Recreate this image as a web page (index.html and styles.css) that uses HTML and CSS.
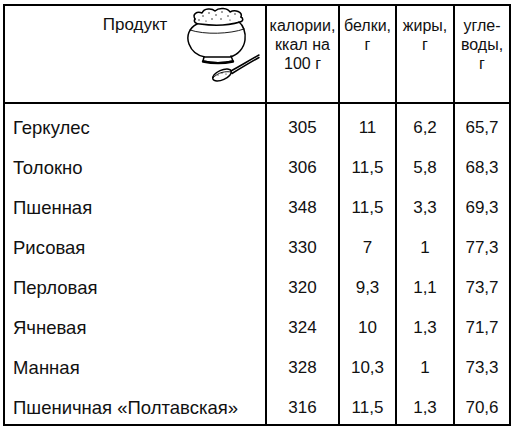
FILE: index.html
```html
<!DOCTYPE html>
<html lang="ru">
<head>
<meta charset="utf-8">
<link rel="stylesheet" href="styles.css">
</head>
<body>
<table class="grid">
  <colgroup>
    <col class="c-name"><col class="c-kcal"><col class="c-p"><col class="c-f"><col class="c-c">
  </colgroup>
  <thead>
    <tr class="head">
      <th class="h-name">
        <span class="h-title">Продукт</span>
        <svg class="pot" viewBox="180 5 80 85" width="80" height="85" aria-hidden="true">
          <g fill="none" stroke="#000" stroke-width="1.5" stroke-linecap="round" stroke-linejoin="round">
            <path d="M195 19 C192 14 197 11 202 13 C204 8 212 8 215 11 C219 7 228 8 230 12 C235 9 243 12 241 17"/>
            <path d="M195 19 C193 22 196 24 200 24 C215 26 230 25 240 22 C244 21 243 18 241 17"/>
            <path d="M197 24 C189 28 186 36 189 44 C192 52 199 56 205 57 L230 57 C238 55 244 48 245 40 C246 32 243 25 239 22"/>
            <path d="M190 30 C205 35 230 34 244 29" stroke-width="0.9"/>
            <path d="M204 57 L203 61 C212 63 224 63 233 61 L231 56"/>
            <path d="M203 61.5 C212 63.5 224 63.5 233 61.5" stroke-width="2.4"/>
            <ellipse cx="222" cy="75" rx="10" ry="4.8" transform="rotate(-24 222 75)"/>
            <path d="M213 78 C218 72 226 71 231 72" stroke-width="0.9"/>
            <path d="M231 71 C240 66 250 60 259 55"/>
            <path d="M232 73.5 C241 68 251 62 259 57.5"/>
          </g>
          <g fill="#000">
            <circle cx="203" cy="16" r="0.7"/><circle cx="209" cy="13" r="0.7"/><circle cx="216" cy="15" r="0.7"/>
            <circle cx="222" cy="12" r="0.7"/><circle cx="228" cy="16" r="0.7"/><circle cx="212" cy="19" r="0.7"/>
            <circle cx="199" cy="20" r="0.7"/><circle cx="235" cy="14" r="0.7"/><circle cx="221" cy="19" r="0.7"/>
            <circle cx="230" cy="20" r="0.6"/><circle cx="206" cy="21" r="0.6"/>
            <circle cx="218" cy="75" r="0.6"/><circle cx="222" cy="73" r="0.6"/><circle cx="226" cy="74" r="0.6"/>
          </g>
        </svg>
      </th>
      <th class="h-col">калории,<br>ккал на<br>100 г</th>
      <th class="h-col">белки,<br>г</th>
      <th class="h-col">жиры,<br>г</th>
      <th class="h-col">угле-<br>воды,<br>г</th>
    </tr>
  </thead>
  <tbody>
    <tr><td class="name">Геркулес</td><td>305</td><td>11</td><td>6,2</td><td>65,7</td></tr>
    <tr><td class="name">Толокно</td><td>306</td><td>11,5</td><td>5,8</td><td>68,3</td></tr>
    <tr><td class="name">Пшенная</td><td>348</td><td>11,5</td><td>3,3</td><td>69,3</td></tr>
    <tr><td class="name">Рисовая</td><td>330</td><td>7</td><td>1</td><td>77,3</td></tr>
    <tr><td class="name">Перловая</td><td>320</td><td>9,3</td><td>1,1</td><td>73,7</td></tr>
    <tr><td class="name">Ячневая</td><td>324</td><td>10</td><td>1,3</td><td>71,7</td></tr>
    <tr><td class="name">Манная</td><td>328</td><td>10,3</td><td>1</td><td>73,3</td></tr>
    <tr><td class="name">Пшеничная «Полтавская»</td><td>316</td><td>11,5</td><td>1,3</td><td>70,6</td></tr>
  </tbody>
</table>
</body>
</html>
```

FILE: styles.css
```css
html, body {
  margin: 0;
  padding: 0;
  background: #fff;
}
body {
  padding: 4px 0 0 3px;
  font-family: "Liberation Sans", Arial, sans-serif;
  color: #111;
}
.grid {
  border-collapse: collapse;
  table-layout: fixed;
  width: 506px;
  border: 2px solid #000;
}
.c-name { width: 262px; }
.c-kcal { width: 73px; }
.c-p { width: 57px; }
.c-f { width: 58px; }
.c-c { width: 56px; }
.grid th, .grid td {
  border: 2px solid #000;
  border-top: 0;
  border-bottom: 0;
  padding: 0;
}
.head th {
  border-bottom: 2px solid #000;
  height: 86px;
  vertical-align: top;
  font-weight: normal;
}
.h-name {
  position: relative;
}
.h-title {
  display: block;
  margin-top: 9px;
  text-align: center;
  font-family: "Liberation Sans Narrow", "Liberation Sans", sans-serif;
  font-stretch: condensed;
  font-size: 17px;
}
.pot {
  position: absolute;
  left: 175px;
  top: -1px;
}
.h-col {
  padding-top: 10px !important;
  font-family: "Liberation Sans Narrow", "Liberation Sans", sans-serif;
  font-stretch: condensed;
  font-size: 16px;
  line-height: 19px;
  text-align: center;
}
.grid tbody td {
  height: 33px;
  padding-top: 7px;
  text-align: center;
  vertical-align: middle;
  font-size: 17px;
}
.grid tbody td.name {
  text-align: left;
  padding-left: 8px;
  font-size: 18.5px;
}
```
